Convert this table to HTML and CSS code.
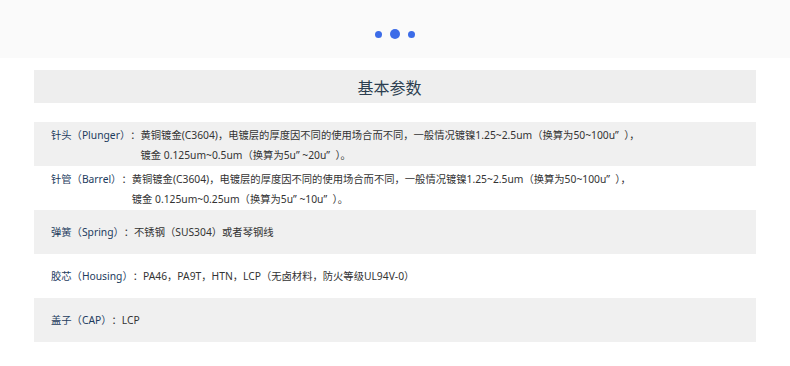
FILE: index.html
```html
<!DOCTYPE html>
<html lang="zh">
<head>
<meta charset="utf-8">
<link rel="stylesheet" href="styles.css">
</head>
<body>
<div class="top">
  <span class="dot"></span><span class="dot big"></span><span class="dot"></span>
</div>
<div class="wrap">
  <div class="title">基本参数</div>
  <div class="rows">
    <div class="row grey">
      <span class="label">针头（Plunger）</span><span class="sep">：</span>
      <div class="val">
        <div>黄铜镀金(C3604)，电镀层的厚度因不同的使用场合而不同，一般情况镀镍1.25~2.5um（换算为50~100u”&nbsp;&nbsp;），</div>
        <div>镀金 0.125um~0.5um（换算为5u”&nbsp;~20u”&nbsp;&nbsp;）。</div>
      </div>
    </div>
    <div class="row">
      <span class="label">针管（Barrel）</span><span class="sep">：</span>
      <div class="val">
        <div>黄铜镀金(C3604)，电镀层的厚度因不同的使用场合而不同，一般情况镀镍1.25~2.5um（换算为50~100u”&nbsp;&nbsp;），</div>
        <div>镀金 0.125um~0.25um（换算为5u”&nbsp;~10u”&nbsp;&nbsp;）。</div>
      </div>
    </div>
    <div class="row grey">
      <span class="label">弹簧（Spring）</span><span class="sep">：</span>
      <div class="val"><div>不锈钢（SUS304）或者琴钢线</div></div>
    </div>
    <div class="row">
      <span class="label">胶芯（Housing）</span><span class="sep">：</span>
      <div class="val"><div>PA46，PA9T，HTN，LCP（无卤材料，防火等级UL94V-0）</div></div>
    </div>
    <div class="row grey">
      <span class="label">盖子（CAP）</span><span class="sep">：</span>
      <div class="val"><div>LCP</div></div>
    </div>
  </div>
</div>
</body>
</html>
```
FILE: styles.css
```css
html, body {
  margin: 0;
  padding: 0;
  background: #ffffff;
  font-family: "Noto Sans", "Noto Sans CJK SC", sans-serif;
  font-size: 10.3px;
  color: #333333;
}
.top {
  height: 58px;
  box-sizing: border-box;
  padding-top: 29px;
  background: #fafafa;
  display: flex;
  justify-content: center;
  gap: 8px;
}
.dot {
  width: 7px;
  height: 7px;
  margin-top: 1.5px;
  border-radius: 50%;
  background: #3c6ce8;
}
.dot.big {
  width: 10px;
  height: 10px;
  margin-top: 0;
}
.wrap {
  width: 722px;
  margin: 12px 0 0 34px;
}
.title {
  height: 33px;
  padding-right: 11px;
  background: #eeeeee;
  display: flex;
  align-items: center;
  justify-content: center;
  font-family: "Noto Sans CJK SC", sans-serif;
  font-size: 16px;
  color: #2c3e50;
}
.rows {
  margin-top: 19px;
  display: flex;
  flex-direction: column;
}
.row {
  display: flex;
  align-items: center;
  min-height: 44px;
  padding-left: 17px;
  box-sizing: border-box;
}
.row.grey {
  background: #f0f0f0;
}
.row .label,
.row .sep,
.row .val {
  line-height: 20px;
}
.row .label {
  color: #1d3c5e;
}
.row:has(.val div + div) .label,
.row:has(.val div + div) .sep {
  align-self: flex-start;
  margin-top: 3px;
}
.row:has(.val div + div) .val {
  padding: 3px 0 1px;
}
```
